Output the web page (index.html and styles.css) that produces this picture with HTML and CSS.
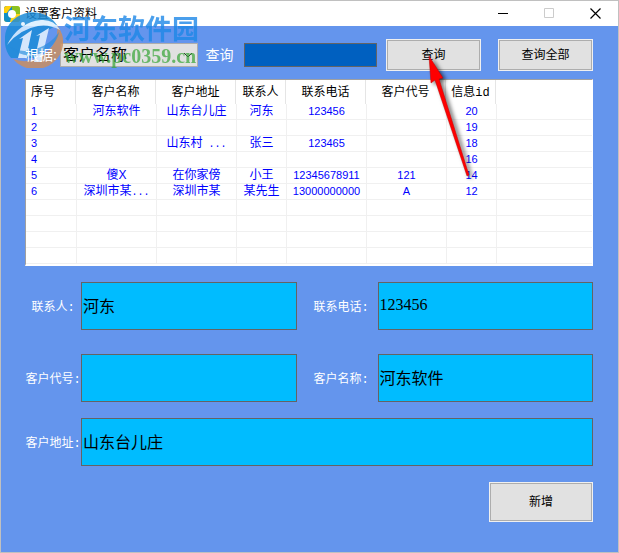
FILE: index.html
```
<!DOCTYPE html>
<html lang="zh-CN">
<head>
<meta charset="utf-8">
<title>设置客户资料</title>
<link rel="stylesheet" href="styles.css">
</head>
<body>
<div class="window">
  <header class="titlebar">
    <svg class="app-icon" viewBox="0 0 16 16" width="16" height="16" aria-hidden="true">
      <rect width="16" height="16" rx="3" fill="#ffd51a"/>
      <path d="M3 0h5v8H0V3a3 3 0 0 1 3-3z" fill="#1287c9"/>
      <path d="M8 0h5a3 3 0 0 1 3 3v5H8z" fill="#8cc11f"/>
      <path d="M8 0L2 8H0V3a3 3 0 0 1 3-3z" fill="#ffcf0a"/>
      <path d="M0 7h8v9H3a3 3 0 0 1-3-3z" fill="#128fc7"/>
      <path d="M8 8h8v5a3 3 0 0 1-3 3H6z" fill="#ffd51a"/>
      <circle cx="8" cy="8" r="4" fill="#fff"/>
    </svg>
    <h1 class="title">设置客户资料</h1>
    <div class="controls">
      <button class="control" aria-label="最小化"><svg viewBox="0 0 11 11" width="11" height="11"><path d="M0 5.500h10" stroke="#000"/></svg></button>
      <button class="control" aria-label="最大化" disabled><svg viewBox="0 0 11 11" width="11" height="11"><path d="M.5.500h9v9h-9z" fill="none" stroke="#ccc"/></svg></button>
      <button class="control" aria-label="关闭"><svg viewBox="0 0 11 11" width="11" height="11"><path d="M.5.500l10 10M10.500.500l-10 10" stroke="#000" stroke-width="1.200"/></svg></button>
    </div>
  </header>

  <main class="content">
    <div class="toolbar">
      <label class="tool-label" for="field">根据:</label>
      <div class="select-wrap">
        <select class="select" id="field"><option>客户名称</option></select>
        <svg class="chevron" viewBox="0 0 10 6" width="10" height="6" aria-hidden="true"><path d="M1 1l4 4 4-4" fill="none" stroke="#333"/></svg>
      </div>
      <label class="tool-label query-label" for="query">查询</label>
      <input class="query" id="query" type="text">
      <button class="button">查询</button>
      <button class="button">查询全部</button>
    </div>

    <table class="list">
      <colgroup><col class="narrow"><col class="wide"><col class="wide"><col class="narrow"><col class="wide"><col class="wide"><col class="narrow"><col></colgroup>
      <thead>
        <tr><th>序号</th><th>客户名称</th><th>客户地址</th><th>联系人</th><th>联系电话</th><th>客户代号</th><th>信息<span class="mono">id</span></th><th class="rest"></th></tr>
      </thead>
      <tbody>
        <tr><td>1</td><td>河东软件</td><td>山东台儿庄</td><td>河东</td><td>123456</td><td></td><td>20</td><td></td></tr>
        <tr><td>2</td><td></td><td></td><td></td><td></td><td></td><td>19</td><td></td></tr>
        <tr><td>3</td><td></td><td>山东村<span class="mono"> ...</span></td><td>张三</td><td>123465</td><td></td><td>18</td><td></td></tr>
        <tr><td>4</td><td></td><td></td><td></td><td></td><td></td><td>16</td><td></td></tr>
        <tr><td>5</td><td>傻X</td><td>在你家傍</td><td>小王</td><td>12345678911</td><td>121</td><td>14</td><td></td></tr>
        <tr><td>6</td><td>深圳市某<span class="mono">...</span></td><td>深圳市某</td><td>某先生</td><td>13000000000</td><td>A</td><td>12</td><td></td></tr>
        <tr><td></td><td></td><td></td><td></td><td></td><td></td><td></td><td></td></tr>
        <tr><td></td><td></td><td></td><td></td><td></td><td></td><td></td><td></td></tr>
        <tr><td></td><td></td><td></td><td></td><td></td><td></td><td></td><td></td></tr>
        <tr><td></td><td></td><td></td><td></td><td></td><td></td><td></td><td></td></tr>
      </tbody>
    </table>

    <form class="form">
      <label class="label" for="contact">联系人:</label>
      <input class="field" id="contact" type="text" value="河东">
      <label class="label second" for="phone">联系电话:</label>
      <input class="field" id="phone" type="text" value="123456">
      <label class="label" for="code">客户代号:</label>
      <input class="field" id="code" type="text">
      <label class="label second" for="name">客户名称:</label>
      <input class="field" id="name" type="text" value="河东软件">
      <label class="label last" for="address">客户地址:</label>
      <input class="field full last" id="address" type="text" value="山东台儿庄">
      <button class="button add last" type="button">新增</button>
    </form>
  </main>

  <div class="watermark">
    <svg class="mark" viewBox="0 0 58 56" width="58" height="56" aria-hidden="true">
      <path d="M0 28A28 26 0 0 1 52 13L40 20 34 46 6 46A26 26 0 0 1 0 28z" fill="#1c8bd8"/>
      <path d="M52 13A28 27 0 0 1 8 47Q28 54 44 38 54 28 52 13z" fill="#c98e62"/>
      <path d="M2 33Q14 10 36 8 49 7 55 18 44 12 33 14 15 17 2 33z" fill="#d9efff"/>
      <path d="M14 27l13-9-6 28h-8l5-20zM31 24l13-8-8 34h-7l6-27z" fill="#e8f5ff"/>
      <path d="M4 34Q15 42 31 37 46 32 54 20 51 35 34 42 16 47 4 34z" fill="#1c8bd8" opacity=".65"/>
      <circle cx="18" cy="12" r="2" fill="#e8f5ff"/>
    </svg>
    <div class="mark-text">
      <span class="mark-name">河东软件园</span>
      <span class="mark-url">www.pc0359.cn</span>
    </div>
  </div>

  <svg class="arrow" viewBox="0 0 56 130" width="56" height="130" aria-hidden="true">
    <path d="M9 5L11 32 15 29 47 125 49 124 19 28 23 27z" fill="#f00" stroke="#c00000" stroke-width=".5"/>
  </svg>
</div>
</body>
</html>
```
FILE: styles.css
```
* {
  box-sizing: border-box;
}

body {
  margin: 0;
  font: 12px/16px "Liberation Sans", "Noto Sans CJK SC", sans-serif;
  color: #000;
}

button,
input,
select {
  font: inherit;
  color: inherit;
  border-radius: 0;
  margin: 0;
}

.window {
  position: relative;
  min-height: 100vh;
  border: 1px solid #c0c0c0;
  background: #6495ed;
}

.titlebar {
  display: flex;
  align-items: center;
  height: 25px;
  padding-left: 3px;
  background: #fff;
}

.title {
  flex: 1;
  margin: 0;
  padding-left: 5px;
  font-size: 12px;
  line-height: 16px;
  font-weight: 400;
}

.controls {
  display: flex;
}

.control {
  display: flex;
  align-items: center;
  justify-content: center;
  width: 46px;
  height: 24px;
  padding: 0;
  border: 0;
  background: none;
}

.content {
  padding: 13px 25px 30px 24px;
}

.toolbar {
  display: flex;
  align-items: center;
  margin-bottom: 8px;
}

.tool-label {
  position: relative;
  z-index: 2;
  width: 35px;
  font-size: 14px;
  color: #fff;
  white-space: nowrap;
}

.query-label {
  width: 46px;
  padding-left: 7px;
}

.select-wrap {
  position: relative;
  flex: 140 1 0;
}

.select {
  display: block;
  width: 100%;
  height: 24px;
  padding: 0 2px;
  appearance: none;
  border: 1px solid #adadad;
  background: #e1e1e1;
  font-size: 16px;
}

.chevron {
  position: absolute;
  right: 5px;
  top: 9px;
}

.query {
  flex: 128 1 0;
  min-width: 0;
  height: 24px;
  border: 1px solid #646464;
  background: #0060c0;
  color: #fff;
}

.button {
  height: 32px;
  padding: 0;
  border: 1px solid #f0f0f0;
  outline: 1px solid #adadad;
  outline-offset: -2px;
  background: #e1e1e1;
}

.toolbar .button {
  flex: 94 1 0;
  margin-left: 9px;
}

.toolbar .button + .button {
  margin-left: 17px;
}

.list {
  width: 100%;
  table-layout: fixed;
  border-collapse: separate;
  border-spacing: 0;
  border: 1px solid #fff;
  border-bottom-width: 2px;
  border-top-color: #a0a0a0;
  border-left-color: #a0a0a0;
  background: #fff;
}

.narrow {
  width: 50px;
}

.wide {
  width: 80px;
}

.list th {
  height: 24px;
  padding: 0;
  border-right: 1px solid #e5e5e5;
  font-weight: 400;
  text-align: center;
  white-space: nowrap;
}

.list .rest {
  border-right: 0;
}

.list td {
  height: 16px;
  padding: 0;
  border-bottom: 1px solid #f0f0f0;
  border-left: 1px solid #f0f0f0;
  font-size: 11px;
  line-height: 15px;
  vertical-align: middle;
  color: #00f;
  text-align: center;
  white-space: nowrap;
}

.list td:nth-child(2),
.list td:nth-child(3),
.list td:nth-child(4) {
  font-size: 12px;
}

.list th:first-child,
.list td:first-child {
  padding-left: 5px;
  border-left: 0;
  text-align: left;
}

.mono {
  font-family: "Liberation Mono", monospace;
  font-size: 10px;
  line-height: 10px;
}

.list th .mono {
  font-size: 12px;
}

.form {
  display: grid;
  grid-template-columns: 56px 1fr 81px 1fr;
  align-items: center;
  row-gap: 24px;
  padding-top: 16px;
}

.label {
  padding-top: 4px;
  font-family: "Liberation Mono", "Noto Sans CJK SC", monospace;
  color: #fff;
  text-align: center;
  white-space: nowrap;
}

.second {
  padding-left: 8px;
}

.field {
  width: 100%;
  min-width: 0;
  height: 48px;
  padding: 0 1px 2px;
  border: 1px solid #646464;
  background: #00bcff;
  font-family: "Liberation Serif", "Noto Sans CJK SC", serif;
  font-size: 16px;
}

.full {
  grid-column: 2 / -1;
}

.last {
  margin-top: -8px;
}

.add {
  grid-column: 4;
  justify-self: end;
  width: 104px;
  height: 40px;
}

.watermark {
  position: absolute;
  top: 11px;
  left: 4px;
  display: flex;
  pointer-events: none;
}

.mark {
  opacity: .85;
}

.mark-text {
  display: flex;
  flex-direction: column;
  padding-left: 1px;
}

.mark-name {
  font: 700 27px/32px "Noto Sans CJK SC", sans-serif;
  color: #1e88e8;
  opacity: .8;
}

.mark-url {
  font: 700 20px/24px "Liberation Serif", serif;
  color: #35a535;
  opacity: .7;
}

.arrow {
  position: absolute;
  top: 50px;
  left: 419px;
  pointer-events: none;
  filter: drop-shadow(3px 2px 2px rgba(0, 0, 0, .6));
}
```
